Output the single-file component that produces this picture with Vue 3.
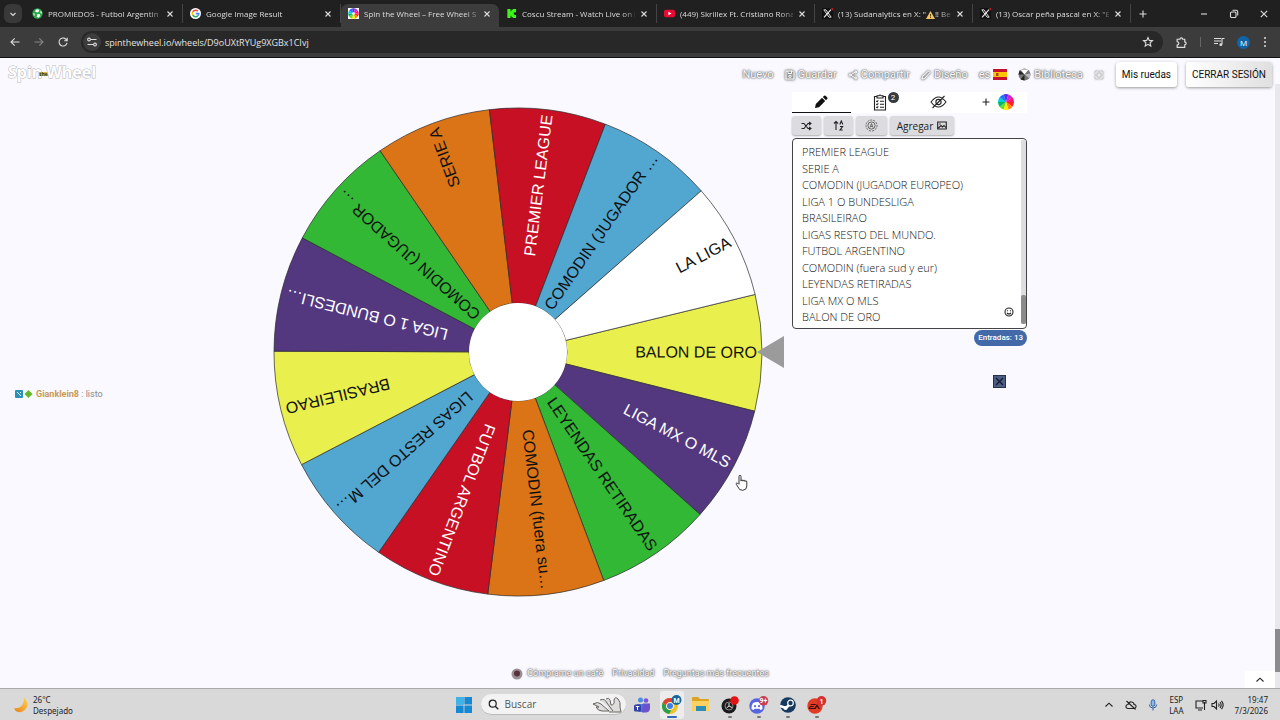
<script setup>
const tabs = [
  { icon: 'ball', title: 'PROMIEDOS - Futbol Argentin' },
  { icon: 'google', title: 'Google Image Result' },
  { icon: 'wheel', title: 'Spin the Wheel – Free Wheel S', active: true },
  { icon: 'kick', title: 'Coscu Stream - Watch Live on I' },
  { icon: 'youtube', title: '(449) Skrillex Ft. Cristiano Rona' },
  { icon: 'x', title: '(13) Sudanalytics en X: "', warn: true, rest: '‼ Be' },
  { icon: 'x', title: '(13) Oscar peña pascal en X: "E' },
]

const entries = [
  'PREMIER LEAGUE', 'SERIE A', 'COMODIN (JUGADOR EUROPEO)', 'LIGA 1 O BUNDESLIGA',
  'BRASILEIRAO', 'LIGAS RESTO DEL MUNDO.', 'FUTBOL ARGENTINO', 'COMODIN (fuera sud y eur)',
  'LEYENDAS RETIRADAS', 'LIGA MX O MLS', 'BALON DE ORO',
].join('\n')

const labels = [
  ['BALON DE ORO', '#e9ef4c', '#111'],
  ['LIGA MX O MLS', '#54387f', '#fff'],
  ['LEYENDAS RETIRADAS', '#32b835', '#111'],
  ['COMODIN (fuera su…', '#da7416', '#111'],
  ['FUTBOL ARGENTINO', '#c81024', '#fff'],
  ['LIGAS RESTO DEL M…', '#52a7d1', '#111'],
  ['BRASILEIRAO', '#e9ef4c', '#111'],
  ['LIGA 1 O BUNDESLI…', '#54387f', '#fff'],
  ['COMODIN (JUGADOR …', '#32b835', '#111'],
  ['SERIE A', '#da7416', '#111'],
  ['PREMIER LEAGUE', '#c81024', '#fff'],
  ['COMODIN (JUGADOR …', '#52a7d1', '#111'],
  ['LA LIGA', '#ffffff', '#111'],
]
const step = 360 / labels.length
const point = (r, deg) => {
  const a = (deg * Math.PI) / 180
  return `${(r * Math.cos(a)).toFixed(2)} ${(r * Math.sin(a)).toFixed(2)}`
}
const slicePath = (mid, inner, outer) => {
  const a = mid - step / 2
  const b = mid + step / 2
  return `M${point(inner, a)}L${point(outer, a)}A${outer} ${outer} 0 0 1 ${point(outer, b)}L${point(inner, b)}A${inner} ${inner} 0 0 0 ${point(inner, a)}Z`
}
const slices = labels.map(([text, fill, ink], i) => {
  const angle = i * step + 0.2
  return { text, fill, ink, angle, d: slicePath(angle, 49, 244) }
})

const hues = ['#f22', '#f80', '#fe0', '#6d2', '#0b6', '#0cd', '#17f', '#53e', '#c2d', '#f17']
const pie = hues.map((fill, i) => {
  const a = i * 36
  return { fill, d: `M0 0L${point(8, a)}A8 8 0 0 1 ${point(8, a + 36)}Z` }
})
</script>

<template>
  <div class="screen">
    <header class="browser">
      <div class="tabstrip">
        <button class="tabmenu" aria-label="Buscar pestañas"><svg width="10" height="10" viewBox="0 0 10 10"><path d="M2.500 4 5 6.500 7.500 4" class="ln" /></svg></button>
        <div v-for="(t, i) in tabs" :key="i" class="tab" :class="{ active: t.active }">
          <svg v-if="t.icon === 'ball'" width="11" height="11" viewBox="0 0 12 12"><circle cx="6" cy="6" r="5.600" fill="#2ba84a" /><path d="M4 2l3-.6 1 2-2 1.600L3.600 4zM1.500 5.500l1.500.7-.2 2.300-1-.5zM6 6.500l2.600.3.4 2-2 1.700-2-1zM9.500 3l1.300 1.500-.5 2L9 5z" fill="#fff" /></svg>
          <svg v-else-if="t.icon === 'google'" width="11" height="11" viewBox="0 0 12 12"><circle cx="6" cy="6" r="6" fill="#fff" /><g fill="none" stroke-width="1.700"><path d="M3 4.300A3.500 3.500 0 0 1 8.600 3.600" stroke="#ea4335" /><path d="M3 4.300a3.500 3.500 0 0 0 0 3.400" stroke="#fbbc05" /><path d="M3 7.700a3.500 3.500 0 0 0 5.400.9" stroke="#34a853" /><path d="M8.400 8.600A3.500 3.500 0 0 0 9.500 6.100H6.200" stroke="#4285f4" /></g></svg>
          <svg v-else-if="t.icon === 'wheel'" width="11" height="11" viewBox="-6 -6 12 12"><path d="M-6-6H6V6H-6z" fill="#fff" /><g transform="scale(.72)"><path v-for="(p, k) in pie" :key="k" :d="p.d" :fill="p.fill" /></g><circle r="1.500" fill="#fff" /></svg>
          <svg v-else-if="t.icon === 'kick'" width="11" height="11" viewBox="0 0 12 12"><path d="M1.500 1H5v2.500h1V2h1.500V1H11v3.500H9.500V5h-1v2h1v.5H11V11H7.500v-1H6V8.500H5V11H1.500z" fill="#3df51b" /></svg>
          <svg v-else-if="t.icon === 'youtube'" width="11" height="11" viewBox="0 0 12 12"><rect y="1.800" width="12" height="8.400" rx="2" fill="#e80c35" /><path d="M4.800 4v4L8.200 6z" fill="#fff" /></svg>
          <svg v-else width="11" height="11" viewBox="0 0 12 12"><path d="M0 0h12v12H0z" fill="#111" /><path d="M2 2h2.300L10 10H7.700z" fill="none" stroke="#eee" /><path d="M9.800 1.800 2.200 10.200" stroke="#eee" stroke-width="1.200" /><path d="M9.500.5 12 0v3z" fill="#c22" /></svg>
          <span class="tabtitle">{{ t.title }}<svg v-if="t.warn" class="warn" width="9" height="8" viewBox="0 0 9 8"><path d="M4.500 0 9 8H0z" fill="#f3c562" /><path d="M4.500 3v2.500M4.500 6v1" stroke="#5a4310" /></svg>{{ t.rest }}</span>
          <button class="tabclose" aria-label="Cerrar pestaña"><svg width="8" height="8" viewBox="0 0 8 8"><path d="M1.500 1.500l5 5m0-5l-5 5" class="ln" /></svg></button>
        </div>
        <button class="winbtn plus" aria-label="Nueva pestaña"><svg width="10" height="10" viewBox="0 0 10 10"><path d="M5 1.500v7M1.500 5h7" class="ln" /></svg></button>
        <div class="wincontrols">
          <button class="winbtn" aria-label="Minimizar"><svg width="10" height="10" viewBox="0 0 10 10"><path d="M2 5h6" class="ln" /></svg></button>
          <button class="winbtn" aria-label="Restaurar"><svg width="10" height="10" viewBox="0 0 10 10"><rect x="1.500" y="3" width="5.500" height="5.500" rx="1" class="ln" /><path d="M3.500 1.300h3.700q1.500 0 1.500 1.500v3.700" class="ln" /></svg></button>
          <button class="winbtn" aria-label="Cerrar"><svg width="10" height="10" viewBox="0 0 10 10"><path d="M1.800 1.800l6.400 6.400m0-6.400L1.800 8.200" class="ln" /></svg></button>
        </div>
      </div>
      <div class="toolbar">
        <button class="nav" aria-label="Atrás"><svg width="12" height="12" viewBox="0 0 12 12"><path d="M10.500 6H2m3.700-3.700L2 6l3.700 3.700" class="ln" /></svg></button>
        <button class="nav dim" aria-label="Adelante"><svg width="12" height="12" viewBox="0 0 12 12"><path d="M1.500 6H10M6.300 2.300 10 6 6.300 9.700" class="ln" /></svg></button>
        <button class="nav" aria-label="Recargar"><svg width="12" height="12" viewBox="0 0 12 12"><path d="M9.800 4.500A4 4 0 1 0 10 6.800M10.200 1.800v3H7.200" class="ln" /></svg></button>
        <div class="omnibox">
          <button class="site" aria-label="Información del sitio"><svg width="12" height="12" viewBox="0 0 12 12"><path d="M5 3.500h5.500M1.500 8.500H7" class="ln" /><circle cx="3" cy="3.500" r="1.400" class="ln" /><circle cx="9" cy="8.500" r="1.400" class="ln" /></svg></button>
          <input class="url" aria-label="Dirección" value="spinthewheel.io/wheels/D9oUXtRYUg9XGBx1CIvj" />
          <button class="site clear" aria-label="Favorito"><svg width="12" height="12" viewBox="0 0 12 12"><path d="M6 1.500l1.300 2.900 3.200.3-2.400 2.100.7 3.200L6 8.300 3.200 10l.7-3.200L1.500 4.700l3.200-.3z" class="ln" /></svg></button>
        </div>
        <div class="tools">
          <button aria-label="Extensiones"><svg width="13" height="13" viewBox="0 0 12 12"><path d="M2 3h2.500a1.300 1.300 0 0 1 2.600 0H9v2.500a1.300 1.300 0 0 1 0 2.600V10.500H2V8.300a1.500 1.500 0 0 0 0-3z" class="ln" /></svg></button>
          <i class="sep"></i>
          <button aria-label="Multimedia"><svg width="12" height="12" viewBox="0 0 12 12"><path d="M1 2.500h7M1 5h7M1 7.500h4M9 8.500V2.500h2.500" class="ln" /><circle cx="7.800" cy="8.700" r="1.400" fill="#ddd" /></svg></button>
          <button class="avatar" aria-label="Perfil">M</button>
          <button aria-label="Menú"><svg width="6" height="12" viewBox="0 0 6 12" fill="#ddd"><circle cx="3" cy="2" r="1" /><circle cx="3" cy="6" r="1" /><circle cx="3" cy="10" r="1" /></svg></button>
        </div>
      </div>
    </header>

    <main class="page">
      <div class="topbar">
        <a href="#" class="brand">Spin<span class="the">the</span>Wheel</a>
        <nav class="menu">
          <a href="#">Nuevo</a>
          <a href="#"><svg width="10" height="10" viewBox="0 0 10 10"><path d="M1 1h6.500L9 2.500V9H1zM3 1v2.500h3.500V1" /><circle cx="5" cy="6.300" r="1.200" /></svg>Guardar</a>
          <a href="#"><svg width="10" height="10" viewBox="0 0 10 10"><path d="M7.500 2 2.500 5l5 3" /><circle cx="7.800" cy="2" r="1" /><circle cx="2.200" cy="5" r="1" /><circle cx="7.800" cy="8" r="1" /></svg>Compartir</a>
          <a href="#"><svg width="10" height="10" viewBox="0 0 10 10"><path d="M7.500 1 9 2.500 3.500 8.500 1 9l.5-2.500z" /></svg>Diseño</a>
          <a href="#" class="lang">es<svg class="flag" width="14" height="11" viewBox="0 0 14 11"><path d="M0 0h14v11H0z" fill="#c8102e" /><path d="M0 3h14v5H0z" fill="#ffc400" /><path d="M3 4h2.500v3H3z" fill="#ad4b20" /></svg></a>
          <a href="#"><svg class="bib" width="13" height="13" viewBox="-6.500 -6.500 13 13"><circle r="6" fill="#777" /><path d="M0 0-5-4-6 0zM0 0-4 5 0 6z" fill="#222" /><path d="M0 0 6-1 5 4z" fill="#bbb" /><path d="M0 0-4-5H4z" fill="#fff" /></svg>Biblioteca</a>
          <a href="#" aria-label="Pantalla completa"><svg width="10" height="10" viewBox="0 0 10 10"><path d="M2 4V2h2M6 2h2v2M8 6v2H6M4 8H2V6" /></svg></a>
        </nav>
        <button class="pagebtn">Mis ruedas</button>
        <button class="pagebtn logout">CERRAR SESIÓN</button>
      </div>

      <div class="content">
        <section class="wheelzone">
          <svg class="wheel" viewBox="-266 -252 532 504">
            <g stroke="#2b2b2b" stroke-opacity=".7" stroke-width="1">
              <path v-for="(s, i) in slices" :key="i" :d="s.d" :fill="s.fill" />
            </g>
            <circle r="49" fill="#fff" />
            <g class="labels">
              <text v-for="(s, i) in slices" :key="i" :fill="s.ink" :transform="`rotate(${s.angle})`" x="239" y="5">{{ s.text }}</text>
            </g>
            <path d="M239 0 266-16V16Z" fill="#9b9b9b" />
          </svg>
          <svg class="cursor" width="14" height="18" viewBox="0 0 14 18"><path d="M4 10V2.500q0-1.200 1-1.200t1 1.200V7q0-1 1-1t1 1.200q0-1 1-1t1 1.300q.2-.8 1-.7t.8 1.200V12q0 4-4 4.300Q4 16.500 3 13L1.300 10.300q-.5-1 .4-1.300T4 10.500" fill="#fff" stroke="#222" stroke-width=".9" /></svg>
        </section>

        <aside class="panel">
          <div class="paneltabs">
            <button class="ptab on" aria-label="Editar"><svg width="14" height="14" viewBox="0 0 14 14"><path d="M1 13l.8-4L8 2.800 11.200 6 5 12.200zM8.800 2l1.400-1.300q.7-.6 1.400 0l1.700 1.700q.6.700 0 1.400L12 5.200z" fill="#111" /></svg></button>
            <button class="ptab" aria-label="Resultados"><svg width="14" height="17" viewBox="0 0 14 17"><path d="M4 2.500H1.500v13.500h11V2.500H10M4 1.800h1.800q1.200-1.600 2.400 0H10V4H4z" class="dk" /><path d="M3.300 7l.8.8 1.200-1.500M3.300 10l.8.8 1.200-1.500M3.300 13l.8.800L5.300 12.300M7 7.300h4M7 10.300h4M7 13.300h4" class="dk" /></svg><span class="count">2</span></button>
            <button class="ptab" aria-label="Ocultar"><svg width="17" height="14" viewBox="0 0 17 14"><path d="M1 7q7.500-10 15 0-7.500 10-15 0zM14.500 1 2.500 13" class="dk" /><circle cx="8.500" cy="7" r="2.600" class="dk" /></svg></button>
            <button class="ptab" aria-label="Agregar rueda"><svg width="8" height="8" viewBox="0 0 8 8"><path d="M4 .5v7M.5 4h7" class="dk" /></svg><svg width="16" height="16" viewBox="-8 -8 16 16"><path v-for="(p, k) in pie" :key="k" :d="p.d" :fill="p.fill" /></svg></button>
          </div>
          <div class="actions">
            <button aria-label="Mezclar"><svg width="11" height="10" viewBox="0 0 11 10"><path d="M.5 2.500H3l4 5h2.500M.5 7.500H3l4-5h2.500M8 .8l2 1.700-2 1.700M8 5.800l2 1.700-2 1.700" class="dk" /></svg></button>
            <button aria-label="Ordenar"><svg width="11" height="11" viewBox="0 0 11 11"><path d="M3 10V1.500M1 3.500l2-2 2 2M6.800 4.500 8.300 1l1.500 3.500M7 6.500h2.600L7 10h2.700" class="dk" /></svg></button>
            <button aria-label="Opciones"><svg width="13" height="13" viewBox="-6.500 -6.500 13 13"><circle r="5.500" class="gr" stroke-dasharray="2 1" /><circle r="3.600" class="gr" /><path d="M-1.500 2 0-2 1.500 2M-1 .8H1" class="gr" /></svg></button>
            <button class="add">Agregar<svg width="10" height="9" viewBox="0 0 10 9"><path d="M.7 1h8.600v7H.7zM1.500 7 4 4.500 5.500 6 7 4.500 8.800 6.500" class="dk" /><circle cx="3" cy="3" r=".7" fill="#222" /></svg></button>
          </div>
          <div class="editor">
            <textarea aria-label="Entradas" :value="entries" rows="11" spellcheck="false"></textarea>
            <div class="track"><i></i></div>
            <button class="emoji" aria-label="Emoji"><svg width="10" height="10" viewBox="0 0 10 10"><circle cx="5" cy="5" r="4" class="dk" /><path d="M3 6q2 2 4 0M3.500 3.300v1M6.500 3.300v1" class="dk" /></svg></button>
          </div>
          <span class="pill">Entradas: 13</span>
          <button class="dismiss" aria-label="Cerrar panel"><svg width="13" height="13" viewBox="0 0 13 13"><path d="M3 3l7 7m0-7l-7 7" stroke="#111a30" stroke-width="1.300" /></svg></button>
        </aside>
      </div>

      <p class="chat"><svg width="18" height="8" viewBox="0 0 18 8"><rect width="8" height="8" rx="1" fill="#2c91b5" /><path d="M2 2l4 4M5 2l1 1" stroke="#dff" /><path d="M13.500 0l4 4-4 4-4-4z" fill="#63b829" /></svg><b>Gianklein8</b> : listo</p>

      <footer class="foot">
        <a href="#"><svg width="12" height="12" viewBox="0 0 12 12"><circle cx="6" cy="6" r="5.500" fill="#9a8f93" /><circle cx="6" cy="5.500" r="3" fill="#59313c" /></svg>Cómprame un café</a>
        <a href="#">Privacidad</a>
        <a href="#">Preguntas más frecuentes</a>
      </footer>
      <button class="totop" aria-label="Subir"><svg width="10" height="8" viewBox="0 0 10 8"><path d="M1.500 5.500 5 2.200l3.500 3.300" class="dk" /></svg></button>
      <div class="pagescroll"><i></i></div>
    </main>

    <footer class="taskbar">
      <div class="weather">
        <svg width="16" height="16" viewBox="0 0 16 16"><defs><linearGradient id="moon" x1="0" y1="1" x2="1" y2="0"><stop offset="0" stop-color="#e8801c" /><stop offset="1" stop-color="#ffd24a" /></linearGradient></defs><path d="M11 1q5 4 3 9-3 6-9 5-3-.7-4-4 4 1 7-1.500Q11 7 11 1z" fill="url(#moon)" /></svg>
        <div><div>26°C</div><div>Despejado</div></div>
      </div>
      <div class="apps">
        <button aria-label="Inicio"><svg width="16" height="16" viewBox="0 0 16 16" fill="#1789d3"><path d="M0 0h7.600v7.600H0zM8.400 0H16v7.600H8.400zM0 8.400h7.600V16H0zM8.400 8.400H16V16H8.400z" /><path d="M0 0h7.600v7.600H0z" fill="#3fb2e8" /></svg></button>
        <label class="search">
          <svg width="11" height="11" viewBox="0 0 11 11"><circle cx="4.700" cy="4.700" r="3.500" fill="none" stroke="#222" stroke-width="1.200" /><path d="M7.300 7.300 10.300 10.300" stroke="#222" stroke-width="1.300" /></svg>
          <input placeholder="Buscar" aria-label="Buscar" />
          <svg width="31" height="18" viewBox="0 0 31 18"><path d="M1 9q5-3 8 0l8 7H10q-4 0-6-4l3 0zM8 5q5-2 7 3l6 8M14 4q3-2 4 1l1 5q4 0 3-5 1-4 4-1 3 3 2 8l1 5H17" fill="#ddd" stroke="#66645f" /></svg>
        </label>
        <button aria-label="Teams"><svg width="17" height="16" viewBox="0 0 17 16"><circle cx="6.500" cy="3" r="2.500" fill="#4a8fe0" /><circle cx="12" cy="3.500" r="2.300" fill="#7b55d8" /><path d="M3 7h7v8H5q-2-1-2-3z" fill="#4d78d7" /><path d="M9 6.500h7V12q-1 4-5 3.500H8z" fill="#6c52cf" /><rect y="7.500" width="7" height="7" rx="1.500" fill="#3340a8" /><path d="M1.800 9.500h3.500M3.500 9.500v3.500" stroke="#fff" /></svg></button>
        <button class="current" aria-label="Chrome"><svg width="21" height="20" viewBox="0 0 21 20"><circle cx="9" cy="11" r="8" fill="#eec12b" /><path d="M9 3a8 8 0 0 1 7 4H9a4 4 0 0 0-3.600 5.500L2 7a8 8 0 0 1 7-4z" fill="#dd4236" /><path d="M2 7l4 6.500A4 4 0 0 0 10.500 15L8 19A8 8 0 0 1 2 7z" fill="#2f9e4c" /><circle cx="9" cy="11" r="3.800" fill="#fff" /><circle cx="9" cy="11" r="3" fill="#3c7ee4" /><circle cx="15.500" cy="5" r="5" fill="#17659d" /><text x="15.500" y="7.500" class="bt">M</text></svg></button>
        <button aria-label="Explorador"><svg width="17" height="15" viewBox="0 0 17 15"><path d="M0 1q0-1 1-1h5l2 2h8q1 0 1 1v11H0z" fill="#dda421" /><path d="M0 4h17v9q0 1-1 1H1q-1 0-1-1z" fill="#fbd163" /><path d="M4 9h10v5H4z" fill="#2b8fb5" /></svg></button>
        <button class="open" aria-label="OBS"><svg width="18" height="18" viewBox="0 0 18 18"><circle cx="8" cy="10" r="7.500" fill="#1c1c1e" /><circle cx="8" cy="10" r="4" fill="none" stroke="#888" /><path d="M8 10V7M8 10l3 1.500M8 10l-2.500 2" stroke="#ddd" /><circle cx="13.500" cy="4.500" r="4.300" fill="#e31313" /></svg></button>
        <button class="open" aria-label="Discord"><svg width="20" height="18" viewBox="0 0 20 18"><circle cx="8" cy="10" r="7.700" fill="#5865e0" /><path d="M4 7q4-2 8 0 2 3 1.500 6l-2 1-1-1.300H5.500l-1 1.300-2-1Q2 10 4 7z" fill="#fff" /><circle cx="6" cy="10.200" r="1.100" fill="#5865e0" /><circle cx="10" cy="10.200" r="1.100" fill="#5865e0" /><circle cx="14.500" cy="4.800" r="4.800" fill="#c84052" /><text x="14.500" y="7.300" class="bt">9+</text></svg></button>
        <button class="open" aria-label="Steam"><svg width="16" height="16" viewBox="0 0 16 16"><circle cx="8" cy="8" r="7.800" fill="#153a5d" /><path d="M0 9l6 2 4-4" stroke="#fff" stroke-width="2.500" fill="none" /><circle cx="10.500" cy="6" r="2.800" fill="#153a5d" stroke="#fff" stroke-width="1.200" /><circle cx="5.500" cy="11" r="2" fill="#fff" /></svg></button>
        <button class="open" aria-label="EA"><svg width="20" height="18" viewBox="0 0 20 18"><circle cx="8" cy="10" r="7.700" fill="#df3b25" /><path d="M4 8h5l-.6 1H3.400zM3 10h4l-.6 1H3.500L3 12h4.500L10 8l3 5h-1.500L10 10.500 8.500 13H1.500z" fill="#3a0d0a" /><circle cx="14.500" cy="4.800" r="4.800" fill="#d63030" /><text x="14.500" y="7.500" class="bt">1</text></svg></button>
      </div>
      <div class="tray">
        <button aria-label="Iconos ocultos"><svg width="10" height="8" viewBox="0 0 10 8"><path d="M1.500 5.500 5 2.200l3.500 3.300" class="dk" /></svg></button>
        <button aria-label="Nube"><svg width="12" height="10" viewBox="0 0 12 10"><path d="M3 8.500q-2.300-.3-2-2.500.4-1.500 2-1.500Q4 1.500 6.500 2 9 2.300 9 4.500q2.300.3 2 2.300-.3 1.700-2 1.700zM1.500 1l9 8.500" class="dk" /></svg></button>
        <button aria-label="Micrófono"><svg width="10" height="12" viewBox="0 0 10 12"><rect x="3.200" y=".8" width="3.600" height="6.500" rx="1.800" fill="#8fb8ea" stroke="#3465a8" /><path d="M1.300 5.500Q1.500 9 5 9t3.700-3.500M5 9v2.500" fill="none" stroke="#3465a8" /></svg></button>
        <div class="two">ESP<br />LAA</div>
        <button class="pair" aria-label="Red y volumen"><svg width="12" height="12" viewBox="0 0 12 12"><path d="M7.500 2H1v7h7M3 11h4M9.500 11V3M8 1.500h3V4H8z" class="dk" /></svg><svg width="13" height="12" viewBox="0 0 13 12"><path d="M1 4.500h2L5.500 2v8L3 7.500H1zM7.500 4.500q1.200 1.500 0 3M9 3q2.300 3 0 6M10.500 1.800q3.300 4.200 0 8.400" class="dk" /></svg></button>
        <div class="two date">19:47<br />7/3/2026</div>
      </div>
    </footer>
  </div>
</template>

<style>
html, body { margin: 0; background: #f9f9ff; }
</style>

<style scoped>
* { box-sizing: border-box; }
.screen { height: 100vh; display: flex; flex-direction: column; overflow: hidden; font-family: "Open Sans", "Noto Sans", sans-serif; font-size: 9px; color: #222; }
button { border: 0; padding: 0; background: none; font: inherit; color: inherit; display: flex; align-items: center; justify-content: center; }
a { color: inherit; text-decoration: none; }
svg { flex: none; display: block; }
.ln { fill: none; stroke: #ddd; stroke-width: 1.1; }
.dk { fill: none; stroke: #222; stroke-width: 1.1; }
.gr { fill: none; stroke: #666; stroke-width: 1; }

.browser { background: #3c3c3c; color: #ddd; border-bottom: 1px solid #111; }
.tabstrip { height: 27px; background: #202020; display: flex; align-items: center; padding-left: 4px; }
.tabmenu { width: 18px; height: 19px; border-radius: 6px; background: #393939; margin-right: 3px; }
.tab { flex: 0 1 158px; min-width: 0; height: 19px; display: flex; align-items: center; padding: 0 8px 0 7px; gap: 5px; border-right: 1px solid #444; }
.tab.active { height: 23px; margin-top: 4px; padding-bottom: 4px; background: #3c3c3c; border-radius: 7px 7px 0 0; border-right: 0; }
.tabtitle { flex: 1; min-width: 0; overflow: hidden; white-space: nowrap; font-size: 8px; mask-image: linear-gradient(90deg, #000 88%, rgba(0, 0, 0, .3)); }
.warn { display: inline-block; vertical-align: middle; }
.tabclose { width: 8px; }
.winbtn { width: 20px; height: 20px; }
.plus { margin-left: 2px; }
.wincontrols { flex: 1; display: flex; justify-content: flex-end; gap: 10px; padding-right: 6px; }
.toolbar { height: 30px; display: flex; align-items: center; padding: 0 12px 0 9px; }
.nav { width: 12px; margin-right: 12px; }
.nav.dim { opacity: .45; }
.omnibox { flex: 1; height: 22px; border-radius: 11px; background: #282828; display: flex; align-items: center; padding: 0 6px 0 2px; margin-right: 12px; }
.site { width: 18px; height: 18px; border-radius: 9px; background: #3c3c3c; }
.clear { background: none; }
.url { flex: 1; min-width: 0; border: 0; outline: 0; background: none; color: #e4e4e4; font: inherit; padding: 0 0 0 4px; }
.tools { display: flex; align-items: center; gap: 12px; }
.sep { width: 1px; height: 10px; background: #666; }
.avatar { width: 13px; height: 13px; border-radius: 50%; background: #0e65a8; color: #fff; font-size: 8px; }

.page { flex: 1; min-height: 0; position: relative; display: flex; flex-direction: column; background: #f9f9ff; font-family: Roboto, "Liberation Sans", sans-serif; }
.topbar { display: flex; align-items: center; padding: 2px 8px 0; height: 31px; }
.brand { flex: 1; padding-top: 2px; align-self: flex-start; font: 700 16px/20px "Open Sans", sans-serif; color: #fff; -webkit-text-stroke: 1px #b4b4b8; paint-order: stroke fill; }
.the { display: inline-block; vertical-align: middle; width: 10px; margin: 0 -3px; background: #e0b93c; color: #333; font-size: 5px; line-height: 4px; -webkit-text-stroke: 0; }
.menu { display: flex; align-items: center; gap: 11px; margin-right: 12px; font-size: 11px; color: #fff; text-shadow: 0 0 1px #555, 0 0 2px #777, 0 0 3px #999; }
.menu a { display: flex; align-items: center; gap: 3px; }
.menu svg { fill: none; stroke: #fff; stroke-width: 1; filter: drop-shadow(0 0 1px #555) drop-shadow(0 0 1px #999); }
.menu .flag, .menu .bib { stroke: none; filter: none; }
.pagebtn { height: 25px; padding: 0 6px; border-radius: 3px; background: #fff; color: #111; font-size: 10px; box-shadow: 0 1px 3px #999; white-space: nowrap; }
.logout { margin-left: 9px; background: linear-gradient(90deg, #fff, #e0e0e0); }
.content { flex: 1; min-height: 0; display: grid; grid-template-columns: minmax(0, 1fr) 235px 253px; }
.wheelzone { position: relative; display: flex; justify-content: flex-end; align-items: flex-start; padding: 11px 8px 0 0; }
.wheel { width: 532px; height: auto; max-width: 100%; }
.labels { font: 16px "Liberation Sans", Arial, sans-serif; text-anchor: end; }
.cursor { position: absolute; right: 43px; top: 385px; }
.panel { display: flex; flex-direction: column; padding-top: 3px; }
.paneltabs { display: grid; grid-template-columns: repeat(4, 1fr); background: #fff; }
.ptab { height: 21px; gap: 8px; position: relative; border-bottom: 1px solid transparent; }
.ptab.on { border-bottom-color: #111; }
.count { position: absolute; top: 0; right: 11px; width: 11px; height: 11px; border-radius: 50%; background: #343a40; color: #fff; font-size: 8px; line-height: 11px; }
.actions { display: flex; gap: 3px; padding: 3px 0; }
.actions button { width: 29px; height: 19px; border-radius: 3px; background: #dcdce0; box-shadow: 0 1px 2px #aaa; }
.actions button:nth-child(3) { width: 31px; }
.actions .add { width: 64px; gap: 4px; font: 10px "Open Sans", sans-serif; }
.editor { position: relative; border: 1px solid #444; border-radius: 4px; background: #fff; overflow: hidden; height: 191px; }
textarea { display: block; width: 100%; height: 100%; border: 0; outline: 0; resize: none; overflow: hidden; padding: 5px 12px 0 9px; background: none; color: #111; font: 300 11px/1.5 "Open Sans", "Noto Sans", sans-serif; }
.track { position: absolute; top: 1px; bottom: 4px; right: 0; width: 5px; background: #dedee2; display: flex; align-items: flex-end; }
.track i { width: 5px; height: 29px; background: #8b8b8b; border-radius: 2px; }
.emoji { position: absolute; right: 12px; bottom: 11px; }
.pill { align-self: flex-end; margin-top: 1px; height: 16px; padding: 0 4px; border-radius: 8px; background: #4369a8; color: #fff; font: 500 8px/16px Roboto, sans-serif; }
.dismiss { align-self: flex-end; margin: 29px 21px 0 0; width: 13px; height: 13px; background: #4d5d84; outline: 1px solid #26304a; outline-offset: -1px; }
.chat { position: absolute; left: 15px; top: 331px; margin: 0; display: flex; align-items: center; font-size: 9px; line-height: 10px; color: #888; white-space: pre; }
.chat svg { margin-right: 3px; }
.chat b { color: #c89a55; }
.foot { display: flex; justify-content: center; gap: 9px; padding-bottom: 8px; font-size: 9px; line-height: 13px; color: #fff; text-shadow: 0 0 1px #555, 0 0 2px #777, 0 0 3px #888; }
.foot a { display: flex; align-items: center; gap: 4px; }
.totop { position: absolute; right: 5px; bottom: 0; width: 30px; height: 17px; background: #fff; }
.pagescroll { position: absolute; right: 0; top: 26px; bottom: 0; width: 5px; background: #e8e8ec; display: flex; align-items: flex-end; padding-bottom: 16px; }
.pagescroll i { width: 5px; height: 43px; background: #8a8a8f; }

.taskbar { height: 32px; border-top: 1px solid #aaa; background: #d9d9d9; display: grid; grid-template-columns: 1fr auto 1fr; align-items: center; font-size: 8px; line-height: 11px; font-family: "Noto Sans", sans-serif; }
.weather { display: flex; align-items: center; gap: 4px; padding-left: 13px; }
.apps { display: flex; align-items: center; gap: 5px; }
.apps button { width: 24px; height: 28px; position: relative; }
.apps .current { background: #ececec; border-radius: 3px; }
.open::after, .current::after { content: ""; position: absolute; bottom: 1px; left: 10px; width: 4px; height: 2px; background: #777; border-radius: 1px; }
.current::after { left: 7px; width: 10px; background: #3269b8; }
.search { width: 145px; height: 21px; border-radius: 11px; background: #f3f3f3; display: flex; align-items: center; gap: 6px; padding: 0 3px 0 7px; border-bottom: 1px solid #bbb; }
.search input { flex: 1; min-width: 0; border: 0; outline: 0; padding: 0; background: none; font: 10px "Open Sans", sans-serif; }
.search input::placeholder { color: #555; opacity: 1; }
.bt { fill: #fff; font: 700 7px Roboto, sans-serif; text-anchor: middle; }
.tray { display: flex; align-items: center; justify-content: flex-end; gap: 11px; padding-right: 12px; }
.two { text-align: center; }
.date { text-align: right; }
.pair { gap: 4px; }
</style>
